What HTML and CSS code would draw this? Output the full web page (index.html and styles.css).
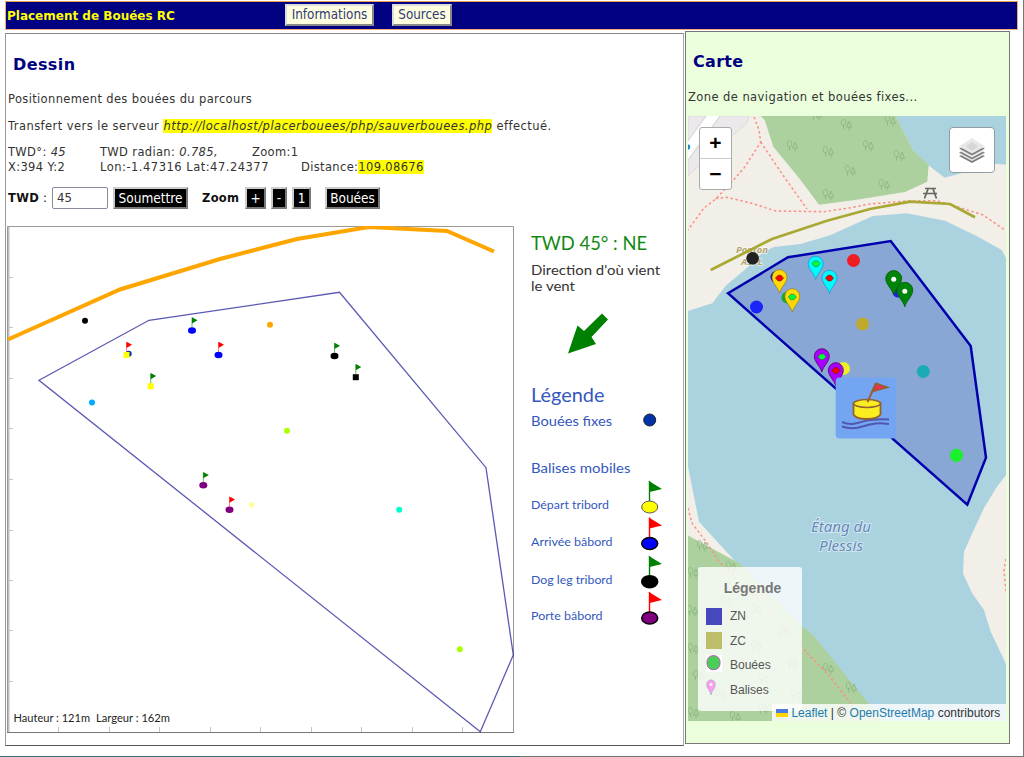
FILE: index.html
```html
<!DOCTYPE html>
<html lang="fr">
<head>
<meta charset="utf-8">
<title>Placement de Bouées RC</title>
<link rel="stylesheet" href="styles.css">
</head>
<body>
<div class="page">
<header class="topbar">
  <h1 class="brand">Placement de Bouées RC</h1>
  <button class="nav-btn nav-info">Informations</button>
  <button class="nav-btn nav-src">Sources</button>
</header>
<main class="columns">
  <section class="panel drawing">
    <h2 class="title title-d">Dessin</h2>
    <p class="text">Positionnement des bouées du parcours</p>
    <p class="text transfer">Transfert vers le serveur <em class="hl url">http://localhost/placerbouees/php/sauverbouees.php</em> effectué.</p>
    <div class="info">
      <div class="info-row"><span class="c1">TWD°: <i>45</i></span><span class="c2">TWD radian: <i>0.785,</i></span><span>Zoom:1</span></div>
      <div class="info-row"><span class="c1">X:394 Y:2</span><span class="c3 lon">Lon:-1.47316 Lat:47.24377</span><span>Distance:<span class="hl">109.08676</span></span></div>
    </div>
    <form class="form">
      <label class="lbl" for="twd"><b>TWD</b> :</label>
      <input class="field" id="twd" value="45">
      <button type="button" class="btn b-send">Soumettre</button>
      <b class="zoom-lbl">Zoom</b>
      <button type="button" class="btn b-plus">+</button>
      <button type="button" class="btn b-minus">-</button>
      <button type="button" class="btn b-one">1</button>
      <button type="button" class="btn b-buoys">Bouées</button>
    </form>
    <svg class="sketch" viewBox="7 226 668 508" width="668" height="508">
      <defs>
        <g id="fg"><path d="M0-3V-13" stroke="#008000" stroke-width=".6"/><path d="M0-13.3 5.5-10.2 0-7z" fill="#008000"/></g>
        <g id="fr"><path d="M0-3V-13" stroke="#f00" stroke-width=".5"/><path d="M0-13.3 5.5-10.2 0-7z" fill="#f00"/></g>
        <g id="bg"><path d="M0-6V-26" stroke="#008000" stroke-width="1.4"/><path d="M-.6-26 12.5-18 0-15z" fill="#008000"/></g>
        <g id="br"><path d="M0-6V-26" stroke="#f00" stroke-width="1.4"/><path d="M-.6-26 12.5-18 0-15z" fill="#f00"/></g>
      </defs>
      <path class="ticks" d="M8 277.500h5M8 327.500h5M8 378.500h5M8 428.500h5M8 479.500h5M8 530.500h5M8 580.500h5M8 630.500h5M8 681.500h5M58.500 727v5M109.500 727v5M159.500 727v5M210.500 727v5M260.500 727v5M311.500 727v5M361.500 727v5M412.500 727v5M462.500 727v5"/>
      <path d="M8.500 226v507" stroke="#c0c0c0" stroke-width="2"/>
      <path d="M7.500 226.500H513.500V732.500H7.500z" fill="none" stroke="#999"/>
      <path d="M7 732.500H514" stroke="#777"/>
      <polyline points="8,339.500 120,289.500 220,259 297,239 369,227 447,231 494,251.500" fill="none" stroke="#ffa500" stroke-width="4"/>
      <polygon points="39,380.300 149,320.300 339.500,292.300 486,467.700 513.300,655 480.300,731.700" fill="none" stroke="#00008b" stroke-opacity=".65" stroke-width="1.300"/>
      <circle cx="85" cy="320.700" r="3"/>
      <circle cx="92" cy="402.600" r="3" fill="#0af"/>
      <circle cx="270" cy="324.700" r="3" fill="#ffa500"/>
      <circle cx="287" cy="430.800" r="3" fill="#af0"/>
      <circle cx="399.200" cy="509.700" r="3" fill="#00ffd0"/>
      <circle cx="459.800" cy="649.200" r="3" fill="#af0"/>
      <circle cx="251.700" cy="504.700" r="2.800" fill="#ffff9a"/>
      <circle cx="128.700" cy="353.800" r="3" fill="#0033aa"/>
      <ellipse cx="192" cy="330.500" rx="4" ry="3.200" fill="#00f"/><use href="#fg" x="192" y="330.500"/>
      <ellipse cx="218.500" cy="355" rx="4" ry="3.200" fill="#00f"/><use href="#fr" x="218.500" y="355"/>
      <ellipse cx="203.300" cy="485.300" rx="4" ry="3.200" fill="#800080"/><use href="#fg" x="203.300" y="485.300"/>
      <ellipse cx="229.500" cy="509.700" rx="4" ry="3.200" fill="#800080"/><use href="#fr" x="229.500" y="509.700"/>
      <ellipse cx="334.500" cy="356" rx="4" ry="3.200"/><use href="#fg" x="334.500" y="356"/>
      <path d="M123.500 352h6v6h-6z" fill="#ff0"/><use href="#fr" x="126.500" y="355"/>
      <path d="M147.700 383.300h6v6h-6z" fill="#ff0"/><use href="#fg" x="150.700" y="386.300"/>
      <path d="M352.800 374.200h6v6h-6z"/><use href="#fg" x="355.800" y="377.200"/>
      <text class="ct size" x="13.500" y="721.700" textLength="76.500" lengthAdjust="spacingAndGlyphs">Hauteur : 121m</text>
      <text class="ct size" x="96" y="721.700" textLength="74" lengthAdjust="spacingAndGlyphs">Largeur : 162m</text>
      <text class="ct wind" x="531" y="250" textLength="116" lengthAdjust="spacingAndGlyphs">TWD 45° : NE</text>
      <text class="ct dir" x="531" y="274.700" textLength="129" lengthAdjust="spacingAndGlyphs">Direction d'où vient</text>
      <text class="ct dir" x="531" y="290.700" textLength="44" lengthAdjust="spacingAndGlyphs">le vent</text>
      <path d="M602 313.500 608 319.500 591.500 337 596 344 568 353.500 577.500 325.500 584 331z" fill="#008000"/>
      <g fill="#3458bd">
      <text class="ct lg" x="531" y="402" textLength="73.500" lengthAdjust="spacingAndGlyphs">Légende</text>
      <text class="ct md" x="531" y="426.300" textLength="81" lengthAdjust="spacingAndGlyphs">Bouées fixes</text>
      <text class="ct md" x="531" y="472.700" textLength="99.500" lengthAdjust="spacingAndGlyphs">Balises mobiles</text>
      <text class="ct sm" x="531" y="509.300" textLength="78" lengthAdjust="spacingAndGlyphs">Départ tribord</text>
      <text class="ct sm" x="531" y="545.700" textLength="81.500" lengthAdjust="spacingAndGlyphs">Arrivée bâbord</text>
      <text class="ct sm" x="531" y="584" textLength="81.500" lengthAdjust="spacingAndGlyphs">Dog leg tribord</text>
      <text class="ct sm" x="531" y="620.300" textLength="71.500" lengthAdjust="spacingAndGlyphs">Porte bâbord</text>
      </g>
      <circle cx="649.700" cy="420" r="6" fill="#0033aa" stroke="#222"/>
      <use href="#bg" x="649.500" y="507"/><ellipse cx="649.700" cy="507" rx="8" ry="6" fill="#ff0" stroke="#555"/>
      <use href="#br" x="649.500" y="543.500"/><ellipse cx="649.700" cy="543.500" rx="8" ry="6" fill="#00f" stroke="#000" stroke-width="1.500"/>
      <use href="#bg" x="649.500" y="582"/><ellipse cx="649.700" cy="581.700" rx="8" ry="6" stroke="#000" stroke-width="1.500"/>
      <use href="#br" x="649.500" y="618"/><ellipse cx="649.700" cy="618" rx="8" ry="6" fill="#800080" stroke="#000" stroke-width="1.500"/>
    </svg>
  </section>
  <section class="panel chart">
    <h2 class="title title-c">Carte</h2>
    <p class="text zone">Zone de navigation et bouées fixes...</p>
    <div class="map">
      <svg class="tiles" viewBox="688 116 318 605" width="318" height="605">
        <defs>
          <g id="tr" fill="none" stroke="#8cb57f" stroke-width=".9"><path d="M-2.500 4.500V0M-4.600-2.300a2.200 2.400 0 1 1 4.200 0a2.200 2.400 0 1 1-4.200 0M3 5.500V2M3-4 .5 2.200H5.500z"/></g>
          <g id="pin"><path d="M0 15C-1.500 9-7.500 5-7.500-.8A7.500 7.500 0 0 1 7.500-.8C7.500 5 1.500 9 0 15z"/></g>
        </defs>
        <path fill="#f2efe9" d="M688 116h318v605H688z"/>
        <path d="M688 116h61l-2 7-40 34-19 19z" fill="#ebe9ec" stroke="#dccfd3" stroke-width=".7"/>
        <path d="M684 156 716 112" stroke="#ccc" stroke-width="12"/><path d="M684 156 716 112" stroke="#fff" stroke-width="10.500"/>
        <circle cx="687.500" cy="147" r="2.800" fill="#1c8ed0"/>
        <path fill="#aad3df" d="M895.700 116 913 150 928 165 944.700 177.700 963 172.700 995 164 1006 164.600V116z"/>
        <path fill="#add19e" d="M760.700 116 764.700 120 773.300 146.700 799 178 819 204.700 855 200 905 192 927.300 181.700 928.700 165 913 150 895.700 116z"/>
        <path fill="#aad3df" d="M688 311 712.300 303.300 725.700 285.700 748 267 763 252 774 247 800.700 244 830.700 235 855 224 873 216 906.700 213.300 945 220.700 976.700 236 1001.700 250 1006 258V475L997 486.700 984 508 970.700 536.700 964 551.700 963 573.300 972 593 984 610 990.700 631.700 1006 664V721H688z"/>
        <path fill="#f2efe9" d="M688 466.700 699 521.700 734 560 743 568 688 560z"/>
        <path fill="#add19e" d="M688 535.500 739 563 800.700 625 814 636 869 704 882 721H688z"/>
        <g>
          <use href="#tr" x="792" y="146"/><use href="#tr" x="828" y="152"/><use href="#tr" x="868" y="146"/><use href="#tr" x="846" y="125"/><use href="#tr" x="890" y="121"/><use href="#tr" x="899" y="156"/><use href="#tr" x="850" y="171"/><use href="#tr" x="884" y="185"/><use href="#tr" x="828" y="195"/><use href="#tr" x="816" y="115"/>
          <use href="#tr" x="702" y="546"/><use href="#tr" x="731" y="567"/><use href="#tr" x="693" y="573"/><use href="#tr" x="692" y="611"/><use href="#tr" x="693" y="649"/><use href="#tr" x="698" y="676"/><use href="#tr" x="693" y="713"/><use href="#tr" x="735" y="717"/><use href="#tr" x="763" y="709"/><use href="#tr" x="828" y="669"/><use href="#tr" x="851" y="688"/><use href="#tr" x="726" y="601"/><use href="#tr" x="756" y="610"/><use href="#tr" x="783" y="632"/><use href="#tr" x="756" y="646"/><use href="#tr" x="792" y="664"/><use href="#tr" x="764" y="679"/><use href="#tr" x="720" y="695"/><use href="#tr" x="796" y="695"/>
        </g>
        <g fill="none" stroke="#fa8f85" stroke-width="1.500" stroke-dasharray="2.500 2.500">
          <path d="M754 117 759 130 760.700 142.300 744 168 732 181.700 715.700 199 704 208 688 230"/>
          <path d="M760.700 142 784 176.700 807 209"/>
          <path d="M715.700 198.500 727 197.300 750.700 203 775.700 211 824 211.700 850.700 207.700 870 204 906.700 201 936.700 200.700 960 207.700 983 215 1006 230.700"/>
          <path d="M688 508 692 523 707 543 719 561.700 737 580 767 608 800.700 646.700 827 673 850.700 703"/>
          <path d="M1006 559 1004 570 1006 592"/>
        </g>
        <path d="M925 188.500h11M923 193.500h14M928 189l-3.500 9.500M933 189l3.500 9.500" stroke="#666" stroke-width="1.700" fill="none"/>
        <g class="place"><text x="736" y="252.500" textLength="32">Ponton</text><text x="741" y="265">ASPL</text></g>
        <polyline points="710.700,270 772,239 827,220.700 870,209 910,201.700 950,204 975,217.300" fill="none" stroke="#a9a832" stroke-width="2.700"/>
        <polygon points="728,293.300 788,257.300 890.700,241 970.700,346 986,457.700 967.300,504.700" fill="#88a7d4" stroke="#0000ad" stroke-width="2.500"/>
        <circle cx="752.600" cy="258.300" r="6.300" fill="#222"/>
        <circle cx="756.500" cy="307" r="6.500" fill="#1c25f8"/>
        <circle cx="853.500" cy="260.500" r="6.500" fill="#f01c24"/>
        <circle cx="862.600" cy="324" r="6.500" fill="#bea92c"/>
        <circle cx="923.300" cy="371.500" r="6.500" fill="#1cabb6"/>
        <circle cx="956.500" cy="455.300" r="6.600" fill="#1cf02c"/>
        <circle cx="843.500" cy="368.500" r="6.500" fill="#f0ee24"/>
        <circle cx="776.500" cy="277" r="6" fill="#0d108c"/>
        <circle cx="787.500" cy="297.500" r="6" fill="#1ca830"/>
        <circle cx="898" cy="292" r="5.500" fill="#2020f0"/>
        <g stroke="#8a7400" stroke-width=".6" fill="#ffd90a"><use href="#pin" x="779.500" y="278"/><use href="#pin" x="792.300" y="297"/></g>
        <g stroke="#238ac8" stroke-width=".7" fill="#00fbff"><use href="#pin" x="815.700" y="264.500"/><use href="#pin" x="829.500" y="278.500"/></g>
        <g stroke="#500060" stroke-width=".8" fill="#aa00ff"><use href="#pin" x="821.800" y="357"/><use href="#pin" x="835.800" y="371"/></g>
        <g stroke="#055e08" stroke-width=".8" fill="#008409"><use href="#pin" transform="translate(893.700 279.300) scale(1.060 1.050)"/><use href="#pin" transform="translate(904.800 291) scale(1.060 1.050)"/></g>
        <g stroke="#5a2000" stroke-width=".6" fill="#f00">
          <path d="M778 275.300h3l2.500 2.800-2.500 2.800h-3l-2.500-2.800z"/><path d="M828 275.300h3l2.500 2.800-2.500 2.800h-3l-2.500-2.800z"/><path d="M834.500 367.800h3l2.500 2.800-2.500 2.800h-3l-2.500-2.800z"/>
        </g>
        <g stroke="#237030" stroke-width=".6" fill="#0f3"><path d="M790.800 294.200h3l2.500 2.800-2.500 2.800h-3l-2.500-2.800z"/><path d="M814.500 260.900h3l2.500 2.800-2.500 2.800h-3l-2.500-2.800z"/><path d="M820.500 353.900h3l2.500 2.800-2.500 2.800h-3l-2.500-2.800z"/></g>
        <circle cx="893.700" cy="279.300" r="2.500" fill="#fff"/><circle cx="904.800" cy="291.200" r="2.500" fill="#fff"/>
        <rect x="835.700" y="377.500" width="60.500" height="61" rx="4" fill="#74a5f3"/>
        <path d="M842 422c11 5 19-1 28-2s12-1 19-.5M842 426.500c12 4 19 0 28-2s12-1.500 19-.5" fill="none" stroke="#4d58ae" stroke-width="2"/>
        <path d="M853.500 403.500v11c3 6 23 6 27 0v-11z" fill="#faee20" stroke="#946231" stroke-width="1.800"/>
        <ellipse cx="867" cy="403.500" rx="13.500" ry="4" fill="#faee20" stroke="#946231" stroke-width="1.600"/>
        <path d="M867.500 402 876 383" fill="none" stroke="#946231" stroke-width="2"/>
        <path d="M876.500 383.500 887.500 387.500 872.500 391.500z" fill="#ef2e52" stroke="#946231" stroke-width="1.700"/>
        <g class="water"><text x="811" y="531.500" textLength="60" lengthAdjust="spacingAndGlyphs">Étang du</text><text x="819" y="550.500" textLength="44" lengthAdjust="spacingAndGlyphs">Plessis</text></g>
      </svg>
      <div class="zoomctl"><span class="zin">+</span><span class="zout">−</span></div>
      <div class="layers">
        <svg viewBox="0 0 28 28" width="28" height="28">
          <path d="M1 20 14 27 27 20 14 15z" fill="#7c7c7c"/><path d="M1 18 14 25 27 18 14 13z" fill="#eee"/><path d="M1 16.500 14 23.500 27 16.500 14 11z" fill="#808080"/><path d="M1 14.500 14 21.500 27 14.500 14 9z" fill="#eee"/><path d="M1 12.500 14 19.500 27 12.500 14 7z" fill="#808080"/><path d="M1 10.500 14 17.500 27 10.500 14 2z" fill="#e8e8e8"/><path d="M8 10.500 14 6 20 10.500 14 15z" fill="#d6d6d6"/>
        </svg>
      </div>
      <div class="legend">
        <h3 class="legend-title">Légende</h3>
        <div class="item"><span class="swatch zn"></span>ZN</div>
        <div class="item"><span class="swatch zc"></span>ZC</div>
        <div class="item"><svg class="ico" viewBox="0 0 16 17" width="16" height="17"><path fill="#fff" d="M0 0h16v17H0z"/><rect x="1" y=".7" width="13" height="14" rx="6" fill="#4ace58" stroke="#b05eb5"/></svg>Bouées</div>
        <div class="item"><svg class="ico" viewBox="0 0 16 17" width="16" height="17"><path d="M5 16C4 11 .7 9.500.7 5.500a4.300 4.600 0 0 1 8.600 0C9.300 9.500 6 11 5 16z" fill="#ff9cf0" stroke="#a9a9cf" stroke-width=".7"/><circle cx="5" cy="5.500" r="1.500" fill="#f4fff4"/></svg>Balises</div>
      </div>
      <div class="credit"><svg viewBox="0 0 12 8" width="12" height="8"><path fill="#4c7be1" d="M0 0h12v4H0z"/><path fill="#ffd500" d="M0 4h12v4H0z"/></svg><a class="lk">Leaflet</a><span>|</span><span>©</span><a class="lk">OpenStreetMap</a><span>contributors</span></div>
    </div>
  </section>
</main>
<footer class="edge"></footer>
</div>
</body>
</html>
```
FILE: styles.css
```css
* { box-sizing: border-box; }
body { margin: 0; background: #fff; font-family: "DejaVu Sans", sans-serif; font-size: 11.5px; color: #333; }
.page { width: 1024px; height: 757px; overflow: hidden; padding: 1px 0 0 5px; border-right: 1px solid #777; display: flex; flex-direction: column; }
.topbar { flex: none; width: 1013px; height: 29px; background: #000080; border: 1px solid #f5a878; border-top-color: #e8a04c; display: flex; align-items: center; padding-left: 1px; }
.brand { margin: 0; width: 278px; font-size: 12px; color: #ff0; white-space: nowrap; }
.nav-btn { position: relative; bottom: 1px; font-family: "DejaVu Sans Condensed", "Noto Sans", sans-serif; font-stretch: condensed; font-size: 13.300px; height: 22px; padding: 0; background: #ffffe0; border: 2px outset #ddd; color: #303878; margin: 0; }
.nav-info { width: 89px; }
.nav-src { width: 60px; margin-left: 18px; }
.columns { display: flex; align-items: flex-start; padding-top: 1px; height: 726px; }
.panel { border: 1px solid #777; }
.drawing { width: 679px; height: 713px; margin-top: 2px; border-color: #888 #aaa #555 #999; padding: 1px 0 0 2px; }
.chart { width: 325px; height: 713px; margin-left: 1px; background: #ebffdc; padding-left: 2px; }
.title { margin: 0; height: 57px; line-height: 60px; font-size: 16px; color: #000080; }
.title-d { padding-left: 5px; letter-spacing: .4px; }
.title-c { padding-left: 5px; letter-spacing: .3px; }
.text { margin: 0; line-height: 14px; white-space: nowrap; letter-spacing: .36px; }
.transfer { margin-top: 13px; letter-spacing: .44px; }
.url { letter-spacing: .5px; }
.zone { margin-top: 1px; letter-spacing: .43px; }
.hl { background: #ff0; }
.info { margin-top: 12px; line-height: 15px; letter-spacing: .35px; }
.info-row { display: flex; white-space: nowrap; }
.c1 { width: 92px; }
.c2 { width: 152px; }
.c3 { width: 201px; }
.lon { letter-spacing: .5px; }
.form { margin-top: 11px; height: 23px; display: flex; align-items: center; color: #111; }
.lbl { width: 44px; white-space: nowrap; letter-spacing: .3px; }
.field { width: 56px; height: 22px; border: 1px solid #8a8a9c; border-radius: 2px; padding: 0 4px; font: 13px "DejaVu Sans Condensed", sans-serif; color: #333; }
.btn { font-family: "DejaVu Sans Condensed", "Noto Sans", sans-serif; font-stretch: condensed; font-size: 13.500px; height: 22px; padding: 0; background: #000; color: #fff; border: 2px outset #ccc; margin: 0; line-height: 16px; }
.b-send { width: 75px; margin-left: 5px; }
.zoom-lbl { width: 43px; margin-left: 14px; letter-spacing: .3px; }
.b-plus { width: 21px; }
.b-minus { width: 16px; margin-left: 5px; }
.b-one { width: 19px; margin-left: 5px; }
.b-buoys { width: 55px; margin-left: 14px; }
.sketch { display: block; margin-top: 17px; margin-left: -1px; }
.ticks { stroke: #c4c4c4; stroke-width: 1; fill: none; }
.ct { font-family: Lato, sans-serif; }
.size { font-size: 11px; fill: #222; }
.wind { font-size: 18.500px; fill: #128a12; }
.dir { font-size: 14px; fill: #333; }
.lg { font-size: 19px; }
.md { font-size: 14px; }
.sm { font-size: 12px; }
.map { position: relative; width: 318px; height: 605px; margin-top: 12px; overflow: hidden; }
.tiles { display: block; }
.place { font: italic bold 9.500px "Noto Sans", sans-serif; fill: #b3a36e; stroke: #fff; stroke-opacity: .6; stroke-width: 1.500px; paint-order: stroke; }
.water { font: italic 14px "Noto Sans", sans-serif; fill: #6688bb; stroke: #fff; stroke-opacity: .5; stroke-width: 1.800px; paint-order: stroke; }
.zoomctl { position: absolute; left: 11px; top: 11px; width: 33px; height: 63px; background: #fff; border: 1px solid #aaa; border-radius: 3px; display: grid; grid-template-rows: 31px 30px; text-align: center; color: #000; font: bold 21px/30px "Liberation Sans", sans-serif; }
.zin { border-bottom: 1px solid #ccc; }
.layers { position: absolute; left: 261px; top: 11px; width: 46px; height: 46px; background: #fff; border: 1px solid #909da2; border-radius: 4px; display: flex; align-items: center; justify-content: center; }
.legend { position: absolute; left: 10px; top: 451px; width: 104px; height: 144px; background: rgba(255,255,255,.8); border-radius: 3px; padding: 11px 8px; font: 12px "Liberation Sans", sans-serif; color: #555; }
.legend-title { margin: 0 0 6px; padding-left: 5px; text-align: center; font: bold 14px/20px "Liberation Sans", sans-serif; color: #777; }
.item { height: 24.500px; display: flex; align-items: center; gap: 8px; }
.swatch { width: 16px; height: 17px; }
.zn { background: #4848bd; }
.zc { background: #bebe6a; }
.ico { flex: none; margin-top: -4px; }
.credit { position: absolute; right: 0; bottom: 0; width: 234px; height: 17px; padding-left: 4px; background: rgba(255,255,255,.8); display: flex; align-items: center; gap: 3.400px; font: 12px "Liberation Sans", sans-serif; color: #333; white-space: nowrap; }
.lk { color: #1f7aad; }
.edge { flex: none; width: 1024px; height: 1px; margin-left: -5px; background: linear-gradient(90deg, #3a6a7c 0 520px, #777 520px); }
```
